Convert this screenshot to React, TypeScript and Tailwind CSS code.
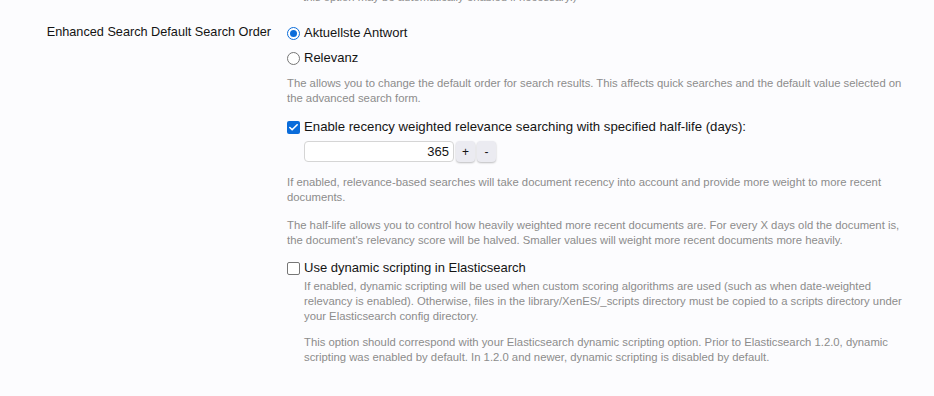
import { Check } from 'lucide-react';

const Hint = ({ children, className = '' }: { children: React.ReactNode; className?: string }) => (
  <p className={`text-[11.3px] leading-[15px] text-[#8c8c8c] ${className}`}>{children}</p>
);

export default function App() {
  return (
    <div className="h-[396px] w-[934px] overflow-hidden bg-[#fcfcfe] text-[13px] text-[#141414] font-['Liberation_Sans',sans-serif]">
      <div className="grid grid-cols-[279px_1fr] gap-x-2">
        <div />
        <Hint className="-mt-[10px] pl-[16px]">this option may be automatically enabled if necessary.)</Hint>

        <div className="pt-[19px] pr-[8px] text-right text-[12.7px] leading-[17px]">Enhanced Search Default Search Order</div>
        <div className="pt-[19px] pr-[18px]">
          <label className="flex h-[18px] items-center gap-[4px]">
            <span className="grid h-[13px] w-[13px] place-items-center rounded-full border border-[#0a6cda] bg-white">
              <span className="h-[7px] w-[7px] rounded-full bg-[#0a6cda]" />
            </span>
            <span>Aktuellste Antwort</span>
          </label>
          <label className="mt-[7px] flex h-[18px] items-center gap-[4px]">
            <span className="h-[13px] w-[13px] rounded-full border border-[#767676] bg-white" />
            <span>Relevanz</span>
          </label>
          <Hint className="mt-[9px] leading-[14px]">
            The allows you to change the default order for search results. This affects quick searches and the default value selected on the advanced search form.
          </Hint>

          <label className="mt-[12px] flex h-[18px] items-center gap-[4px]">
            <span className="grid h-[13px] w-[13px] place-items-center rounded-[2px] bg-[#0a6cda]">
              <Check size={11} strokeWidth={3.5} className="text-white" />
            </span>
            <span className="text-[13.2px]">Enable recency weighted relevance searching with specified half-life (days):</span>
          </label>
          <div className="mt-[5px] ml-[17px] flex items-center gap-[2px]">
            <div className="flex h-[21px] w-[150px] items-center justify-end rounded-[4px] border border-[#d5d5d5] bg-white px-[4px]">365</div>
            <button className="h-[21px] w-[19px] rounded-[4px] bg-[#ebebf1] text-[12px] shadow-[0_1px_2px_rgba(0,0,0,0.25)]">+</button>
            <button className="h-[21px] w-[19px] rounded-[4px] bg-[#ebebf1] text-[12px] shadow-[0_1px_2px_rgba(0,0,0,0.25)]">-</button>
          </div>
          <Hint className="mt-[13px]">
            If enabled, relevance-based searches will take document recency into account and provide more weight to more recent documents.
          </Hint>
          <Hint className="mt-[13px]">
            The half-life allows you to control how heavily weighted more recent documents are. For every X days old the document is, the document's relevancy score will be halved. Smaller values will weight more recent documents more heavily.
          </Hint>

          <label className="mt-[11px] flex h-[18px] items-center gap-[4px]">
            <span className="h-[13px] w-[13px] rounded-[2px] border border-[#767676] bg-white" />
            <span>Use dynamic scripting in Elasticsearch</span>
          </label>
          <div className="pl-[17px]">
            <Hint className="mt-[2px]">
              If enabled, dynamic scripting will be used when custom scoring algorithms are used (such as when date-weighted relevancy is enabled). Otherwise, files in the library/XenES/_scripts directory must be copied to a scripts directory under your Elasticsearch config directory.
            </Hint>
            <Hint className="mt-[11px]">
              This option should correspond with your Elasticsearch dynamic scripting option. Prior to Elasticsearch 1.2.0, dynamic scripting was enabled by default. In 1.2.0 and newer, dynamic scripting is disabled by default.
            </Hint>
          </div>
        </div>
      </div>
    </div>
  );
}
